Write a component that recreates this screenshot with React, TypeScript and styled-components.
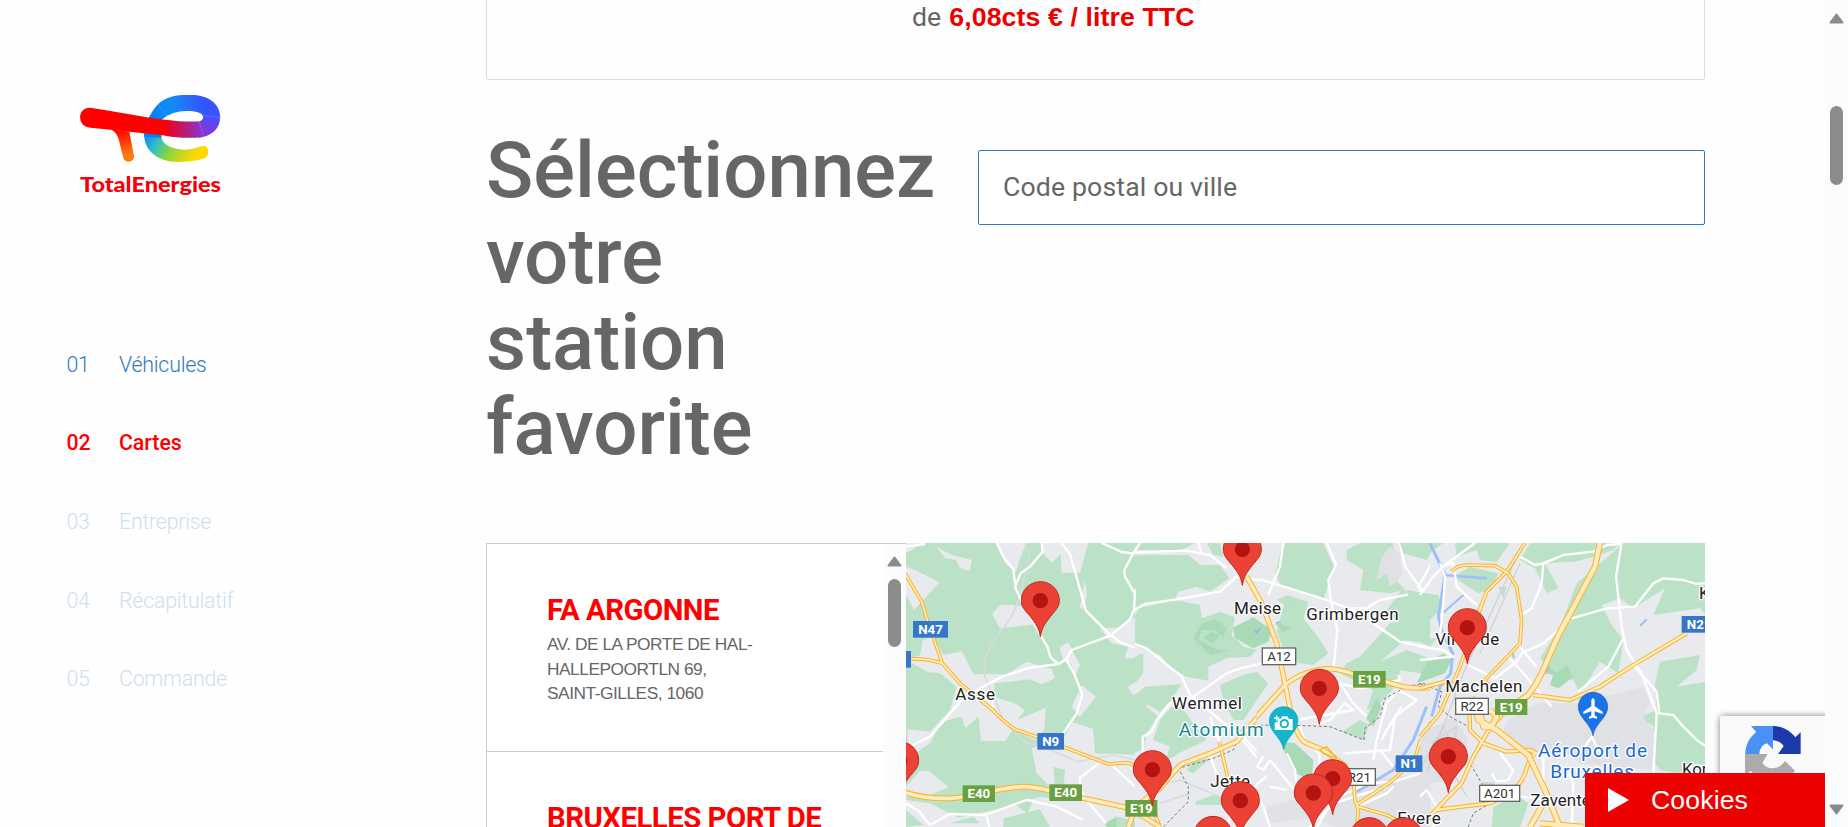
import React from 'react';
import styled, { createGlobalStyle } from 'styled-components';

const GlobalStyle = createGlobalStyle`
  * { box-sizing: border-box; }
  html, body { margin: 0; padding: 0; overflow: hidden; background: #fff; }
`;

const Page = styled.div`
  display: flex;
  width: 1848px;
  height: 827px;
  overflow: hidden;
  position: relative;
  background: #fefefe;
  color: #666;
  font-family: Roboto, 'Liberation Sans', sans-serif;
`;

const Sidebar = styled.aside`
  width: 486px;
  flex: none;
  padding: 95px 0 0 66.5px;
`;

const LogoSlot = styled.div`
  margin-left: 13.5px;
  height: 105px;
`;

const Steps = styled.ol`
  list-style: none;
  margin: 125.5px 0 0;
  padding: 0;
`;

const Step = styled.li<{ $state: 'done' | 'active' | 'todo' }>`
  display: flex;
  height: 78.6px;
  align-items: center;
  font-size: 21.33px;
  letter-spacing: ${p => (p.$state === 'active' ? -0.05 : -0.22)}px;
  line-height: 30px;
  font-weight: ${p => (p.$state === 'active' ? 500 : 300)};
  color: ${p => ({ done: '#337ab7', active: '#ff0000', todo: '#cfdfec' }[p.$state])};
`;

const StepNumber = styled.span`
  width: 52.5px;
`;

const Main = styled.main`
  width: 1219px;
  flex: none;
`;

const OfferCard = styled.section`
  height: 80px;
  border: 1px solid #d3dfe2;
  border-top: 0;
  border-radius: 0 0 3px 3px;
  padding-left: 425px;
  font-size: 26.67px;
  line-height: 34px;
  white-space: pre;
`;

const Price = styled.strong`
  margin-left: 1.5px;
  color: #ed0000;
  font-family: 'Liberation Sans', sans-serif;
  font-weight: 700;
  letter-spacing: 0.11px;
`;

const SearchRow = styled.section`
  display: flex;
  justify-content: space-between;
  padding-top: 48px;
  height: 463px;
`;

const Heading = styled.h1`
  margin: 0;
  width: 400px;
  font-size: 78px;
  line-height: 85.8px;
  font-weight: 500;
`;

const SearchInput = styled.input`
  margin-top: 22px;
  width: 727px;
  height: 75px;
  border: 1px solid #337ab7;
  border-radius: 2px;
  padding: 0 24px 1px;
  background: #fff;
  font: 400 26.67px Roboto, sans-serif;
  letter-spacing: 0.13px;
  color: #666;
  outline: 0;
  &::placeholder { color: #666; opacity: 1; }
`;

const Locator = styled.section`
  display: flex;
  height: 284px;
  overflow: hidden;
`;

const StationPanel = styled.div`
  display: flex;
  width: 420px;
  flex: none;
  border: 1px solid #ccc;
  border-width: 1px 0 0 1px;
`;

const StationList = styled.div`
  flex: 1;
  min-width: 0;
  background: #fff;
`;

const Station = styled.article`
  height: 208px;
  padding: 47px 60px 0;
  border-bottom: 1px solid #ccc;
`;

const StationName = styled.h2`
  margin: 0;
  color: #f00;
  font-size: 29.33px;
  font-weight: 700;
  letter-spacing: -0.5px;
  line-height: 38px;
  white-space: nowrap;
`;

const Address = styled.p`
  margin: 3px 0 0;
  font: 400 17.33px/24.5px 'Liberation Sans', sans-serif;
  letter-spacing: -0.48px;
  white-space: pre;
`;

const ScrollTrack = styled.div<{ $pad: number }>`
  width: 23px;
  flex: none;
  height: 100%;
  display: flex;
  flex-direction: column;
  align-items: center;
  padding: ${p => p.$pad}px 0 12px;
  background: #fcfcfc;
`;

const ScrollThumb = styled.div<{ $gap: number; $size: number }>`
  width: 13px;
  height: ${p => p.$size}px;
  margin-top: ${p => p.$gap}px;
  flex: none;
  border-radius: 7px;
  background: #8b8b8b;
`;

const PageScroll = styled.div`
  margin-left: auto;
  height: 100%;
  display: flex;
`;

const Spacer = styled.div`
  flex: 1;
`;

const CaptchaBadge = styled.div`
  position: absolute;
  left: 1720px;
  top: 716px;
  width: 105px;
  height: 111px;
  overflow: hidden;
  padding: 10px 0 0 25px;
  background: #f9f9f9;
  border-radius: 3px 0 0 3px;
`;

const CaptchaShadow = styled.div`
  position: absolute;
  left: 1700px;
  top: 696px;
  width: 125px;
  height: 131px;
  overflow: hidden;
  &::before {
    content: '';
    position: absolute;
    left: 20px;
    top: 20px;
    width: 340px;
    height: 130px;
    border-radius: 3px;
    box-shadow: 0 0 7px #808080;
  }
`;

const CookieBar = styled.button`
  position: absolute;
  left: 1585px;
  top: 773px;
  width: 240px;
  height: 54px;
  border: 0;
  padding: 0 0 0 23px;
  display: flex;
  align-items: center;
  gap: 22px;
  background: #ed0000;
  color: #fff;
  font: 400 26.67px 'Liberation Sans', sans-serif;
  letter-spacing: 0.1px;
`;

const ArrowIcon = styled.svg`
  flex: none;
`;

const Arrow = ({ down = false }: { down?: boolean }) => (
  <ArrowIcon width="15" height="11" viewBox="0 0 15 11">
    <path
      d={down ? 'M1.5 1.5H13.5L7.5 9.5Z' : 'M1.5 9.5H13.5L7.5 1.5Z'}
      fill="#8b8b8b"
      stroke="#8b8b8b"
      strokeWidth="2"
      strokeLinejoin="round"
    />
  </ArrowIcon>
);

const Logo = () => (
  <svg width="142" height="105" viewBox="60 45 426 315">
    <defs>
      <linearGradient id="sky" gradientUnits="userSpaceOnUse" x1="270" y1="130" x2="480" y2="90">
        <stop offset="0" stopColor="#0080ff" />
        <stop offset=".35" stopColor="#148cf5" />
        <stop offset=".8" stopColor="#3354ff" />
        <stop offset="1" stopColor="#3c55ff" />
      </linearGradient>
      <linearGradient id="band" gradientUnits="userSpaceOnUse" x1="318" y1="0" x2="480" y2="0">
        <stop offset="0" stopColor="#f0001c" />
        <stop offset=".35" stopColor="#b81c70" />
        <stop offset=".65" stopColor="#8833d0" />
        <stop offset="1" stopColor="#6a3ae8" />
      </linearGradient>
      <linearGradient id="turn" gradientUnits="userSpaceOnUse" x1="455" y1="108" x2="440" y2="165">
        <stop offset="0" stopColor="#3c55ff" />
        <stop offset=".6" stopColor="#783ae2" />
        <stop offset="1" stopColor="#8833d8" />
      </linearGradient>
      <linearGradient id="lower" gradientUnits="userSpaceOnUse" x1="262" y1="160" x2="400" y2="235">
        <stop offset="0" stopColor="#1088f4" />
        <stop offset=".25" stopColor="#32bfc0" />
        <stop offset=".55" stopColor="#90d53c" />
        <stop offset="1" stopColor="#ffd800" />
      </linearGradient>
      <linearGradient id="leg" x1="0" y1="0" x2="0.2" y2="1">
        <stop offset=".1" stopColor="#f00" />
        <stop offset=".9" stopColor="#ff7a10" />
      </linearGradient>
    </defs>
    <g>
      <path d="M253 165C252 208 288 247 360 246C400 245 420 239 434 234C451 226 448 197 430 197C415 200 396 209 373 209C327 207 305 190 304 168Z" fill="url(#lower)" />
      <path d="M252 170C251 138 270 99 294 73C318 49 350 45 390 44C447 45 481 72 481 113H430C430 98 407 93 377 93C350 94 334 101 319 109L304 120V174Z" fill="url(#sky)" />
      <path d="M430 108C431 102 481 104 480 115C479 151 447 171 417 173L418 124C427 121 431 116 430 108Z" fill="url(#turn)" />
      <path d="M317 119C354 124 391 126 418 124L429 170C397 176 351 174 317 167Z" fill="url(#band)" />
      <path d="M147 148C166 151 173 166 178 185L189 230C194 253 224 247 222 228L208 155Z" fill="url(#leg)" />
      <path d="M91 83C50 82 50 140 91 143L153 149L319 167V120C240 109 166 94 91 83Z" fill="#f00" />
      <path d="M294 73L320 108M430 106L480 113M418 124L429 166" stroke="#fff" strokeOpacity=".35" strokeWidth="1.3" />
    </g>
    <text x="60" y="336" fontFamily="Lato, sans-serif" fontWeight="900" fontSize="62" fill="#f5000c" textLength="423" lengthAdjust="spacingAndGlyphs">TotalEnergies</text>
  </svg>
);

const CaptchaIcon = () => (
  <svg width="56" height="56" viewBox="0 0 168 168">
    <path d="M84 0H18L34 18C13 35 1 57 1 84H43C44 67 54 54 66 52L84 70Z" fill="#4a90f5" />
    <path d="M84 0V43C97 44 109 50 116 60L99 84H167V19L151 34C135 13 112 1 84 0Z" fill="#1c3aa9" />
    <path d="M0 84V150L17 134C52 180 121 175 150 134L120 105C103 132 68 134 52 111L68 84Z" fill="#ababab" />
  </svg>
);

const GREEN = '#bbe2c7';
const LAND = '#e8eaed';

const Highway = ({ d, w = 13 }: { d: string; w?: number }) => (
  <g fill="none" strokeLinejoin="round">
    <path d={d} stroke="#f9b428" strokeWidth={w + 2} />
    <path d={d} stroke="#ffebbd" strokeWidth={w - 4} />
  </g>
);

const Pin = ({ x, y }: { x: number; y: number }) => (
  <g transform={`translate(${x} ${y})`}>
    <path
      d="M0 0C-4 -26 -14 -40 -30 -60C-46 -80 -57 -88 -57 -109C-57 -140 -31 -165 0 -165C31 -165 57 -140 57 -109C57 -88 46 -80 30 -60C14 -40 4 -26 0 0Z"
      fill="#ea4335"
      stroke="#c5221f"
      strokeWidth="3"
    />
    <circle cy="-108" r="23" fill="#b31412" />
  </g>
);

const Place = ({ x, y, w, size = 51, color = '#202124', children }: { x: number; y: number; w?: number; size?: number; color?: string; children: string }) => (
  <text
    x={x}
    y={y}
    textLength={w}
    lengthAdjust="spacing"
    fontFamily="Roboto, sans-serif"
    fontSize={size}
    fill={color}
    stroke="#fff"
    strokeWidth="8"
    strokeLinejoin="round"
    paintOrder="stroke"
  >
    {children}
  </text>
);

const shieldColors = {
  blue: ['#3576cb', '#fff', 'none'],
  green: ['#69a042', '#fff', 'none'],
  white: ['#fff', '#333', '#666'],
};

const Shield = ({ x, y, w, h = 50, kind, children }: { x: number; y: number; w: number; h?: number; kind: keyof typeof shieldColors; children: string }) => {
  const [bg, fg, line] = shieldColors[kind];
  return (
    <g>
      <rect x={x} y={y} width={w} height={h} fill={bg} stroke={line} strokeWidth="4" />
      <text
        x={x + w / 2}
        y={y + h / 2 + 14}
        textAnchor="middle"
        fontFamily="Roboto, sans-serif"
        fontWeight={kind === 'white' ? 400 : 700}
        fontSize="40"
        fill={fg}
      >
        {children}
      </text>
    </g>
  );
};

const WestLand = () => (
  <g>
    <rect x="0" y="0" width="815" height="861" fill={GREEN} />
    <g fill={LAND}>
      <path d="M18 9H70L18 40ZM110 20L155 45L216 60L208 93L180 85L168 60L135 55ZM290 9H380L360 55L347 97L315 70ZM425 9H565L540 98H485L482 42L455 68L425 35Z" />
      <path d="M18 80L45 90L119 127L42 210L18 165ZM276 222L300 195L350 195L395 210L410 252L300 265ZM555 120L561 165L548 210L540 200Z" />
      <path d="M18 360L60 345L68 300L100 290L130 345L186 334L220 403H320L380 365L455 388L465 415L425 433L390 418L285 430L280 470L345 490L375 512L352 540L438 503L432 570L405 600L340 567L315 603H243L235 530L195 564L185 530L125 545L90 610L25 655L22 568L90 575L150 510L170 440L120 400L85 397Z" />
      <path d="M478 322L505 307L540 375L527 405L512 370L490 360ZM545 435L587 470L540 532L515 500ZM600 265L665 262L715 223L709 280L740 310L810 350V400L735 395L700 468L683 440L735 410L730 355L673 355L685 320L635 310Z" />
      <path d="M518 547L579 566L585 640L740 645L720 555L762 550L790 485H810V861H795L650 830L540 795L500 790L410 700L395 625L490 595ZM18 740L60 693H86L146 742L90 765L18 770Z" />
      <path d="M18 780L90 790L175 833L290 808L420 770L520 785L650 825V861H18Z" />
    </g>
    <path d="M18 810L70 855L18 861ZM325 780L400 780L382 820ZM150 850L220 830L240 850ZM310 835L420 808L450 861H310Z" fill={GREEN} />
    <path d="M614 850L650 830V861H620Z" fill="#a8dab5" />
    <path d="M460 680L495 690L490 755L465 740Z" fill={GREEN} />
    <path d="M372 9L388 45L360 170L335 230L275 310L257 350L254 410L275 455L310 540L370 605L450 630L535 665L640 645L705 660" fill="none" stroke="#d8dade" strokeWidth="5" />
    <g fill="none" stroke="#fff" strokeWidth="7" strokeLinejoin="round">
      <path d="M425 9L428 35L390 80L362 100L345 140L365 185L421 285L442 320L452 353L476 372L498 358L515 330L632 286L690 238L703 208L740 190L815 178" />
      <path d="M290 9L310 50L340 88L345 130M485 9L510 42L535 130L558 212L632 286L665 308L722 330L815 388M720 9L697 45L673 90L674 108L704 160L703 208M605 9L665 36L697 40L815 34" />
      <path d="M476 372L390 383L310 408L240 445L180 485L90 590L18 625M498 358L522 400L547 463L530 520L490 580M275 455L278 505M815 495L785 515L765 570L730 580L727 670L690 685M600 668L540 713V745L560 780L618 850M640 680L700 735L760 790M18 790L55 812L90 855L150 822L255 825L380 780L470 800L550 840M260 830L268 861M18 20L75 12" />
    </g>
    <Highway w={9} d="M15 100L65 185L85 250L127 370L180 430L278 510Q310 545 345 568L410 590L625 672L685 668L705 680M30 357Q80 355 127 370" />
    <Highway w={15} d="M10 756Q80 778 150 775C240 770 300 740 370 740C430 740 460 760 530 770L690 805L770 861M685 861L700 820L815 695M720 861L795 765" />
  </g>
);

const CentreLand = () => (
  <g transform="translate(780 0)">
    <rect x="30" y="0" width="785" height="861" fill={LAND} />
    <g fill={GREEN}>
      <path d="M370 9H490L522 80L490 180L365 140L345 100ZM560 30L600 9H700V110L735 150L690 160L600 150L610 90L560 60Z" />
      <path d="M380 165L445 185L430 235L480 300L505 340L460 375L385 365L350 275Z" />
      <path d="M540 400L560 370L600 350L690 250L715 245L735 300L660 365L740 330L810 355V405L720 390L715 430L650 500L620 510L640 450ZM680 210L725 150L800 170L810 220V310L725 300L715 245Z" />
      <path d="M350 180L380 165L390 205ZM545 575L600 540L628 555L610 600ZM735 770L768 755L770 772L740 780Z" />
    </g>
    <g fill="#a8dab5">
      <path d="M365 605L405 610L460 660L455 720L405 700L375 640ZM335 240L395 265L370 275ZM618 535L650 475L665 500L640 560Z" />
    </g>
    <path d="M665 50L690 20L720 40L725 110L690 140L680 100L650 120Z" fill="#dfe1e4" />
    <path d="M320 800L400 780L500 790L600 720L810 700V861H530L450 835L320 850Z" fill="#e0e2e5" />
    <path d="M330 250L365 243L350 252Z" fill="#8ab4f8" />
    <path d="M590 755L700 690L760 600L800 500" stroke="#9dbffb" strokeWidth="9" fill="none" />
    <g fill="none" stroke="#fff" strokeWidth="7" strokeLinejoin="round">
      <path d="M260 105L500 180L590 215L720 305L815 325M500 9L528 75L505 120L512 180L532 270L520 390L490 400M720 9L735 80L790 155L660 180L620 205L560 205M370 9L360 80L325 165M815 70L775 140L815 190" />
      <path d="M330 660L420 770M330 660L310 690L290 680L310 650M380 640L405 690L420 800M330 861L310 800L280 740L320 710M330 740L380 750M480 740L478 640L435 600L410 540L580 510L555 490L510 540L480 550M540 430L600 445L720 420L715 405M540 430L580 490L620 530M550 640L690 630L705 530L770 480L715 450L680 490L650 600L640 660" />
      <path d="M660 630L700 680M470 861L520 780L620 730L700 725L815 690M725 500L680 570L665 600M450 861L520 790L680 740M590 800L680 760L700 740" />
    </g>
    <path d="M300 556L380 555L510 560L612 600L615 565L660 530L675 475L740 440L790 430L815 440" fill="none" stroke="#73777c" strokeWidth="3" strokeDasharray="9 7" />
    <Highway w={9} d="M580 720L585 780L595 810L590 861M590 795L700 720L765 655L780 605L815 545M595 800L680 825L750 861" />
    <Highway w={14} d="M285 535L375 435Q415 400 480 388C535 380 560 400 635 415C700 425 710 450 815 443M260 110L305 190L350 310L385 480Q405 595 440 610L490 630L560 680" />
    <path d="M480 630L500 620L530 655L490 640Z" fill="none" stroke="#f9b428" strokeWidth="4" />
  </g>
);

const MeiseLand = () => (
  <g transform="translate(630 0)" clipPath="url(#meise)">
    <clipPath id="meise">
      <path d="M75 0H400L500 230L490 370V445L440 480V861H75Z" />
    </clipPath>
    <rect x="60" y="0" width="450" height="861" fill={LAND} />
    <g fill={GREEN}>
      <path d="M60 9H255L215 30L90 30L60 25ZM290 9L330 9L340 50L310 45ZM60 45H235L270 75L330 75L358 115L300 155L260 140L205 155L190 190L130 190L75 205V110Z" />
      <path d="M60 265L85 205L195 180L270 195L275 235L330 215L375 232L365 285L400 320L440 330L420 350L350 355L295 380V422L230 410L180 380L150 345L60 310ZM75 350L100 340V400L75 430ZM85 9H60V100ZM75 465L105 440L215 432L180 485L150 515L115 495L75 510Z" />
      <path d="M60 480L110 500L145 530L110 580L100 630L60 640ZM150 540L185 500L215 500L255 560L290 600L215 635L165 665L180 620L130 600ZM330 435L400 405L440 395L475 430L400 540L370 540L340 480ZM230 690L250 665L300 655L250 700ZM255 785L310 765L340 775L335 795H258ZM470 40L520 100L515 150L480 145Z" />
    </g>
    <g fill="#a8dab5">
      <path d="M368 263L430 232L485 270L475 305L430 325L375 295Z" />
      <path fillRule="evenodd" d="M250 295L275 250L315 237L350 265L340 290L310 270L275 270L265 300L325 330L360 330L300 345ZM280 295L305 275L330 285L310 310Z" />
    </g>
    <path d="M432 275L455 262L440 282Z" fill="#8ab4f8" />
    <path d="M145 735L210 720L330 770L400 765L460 790M150 790L240 760" fill="none" stroke="#d8dade" strokeWidth="5" />
    <g fill="none" stroke="#fff" strokeWidth="7" strokeLinejoin="round">
      <path d="M0 20L40 38L230 32L300 45L350 85M265 9L275 40M90 9L45 75L42 100L75 150L72 210L105 192L200 178L330 155L380 110L500 130" />
      <path d="M0 285L15 290L110 325L215 410L240 465L330 540L380 580L490 710L520 740M250 470L350 400L390 385L480 365M250 470L180 490L140 540L125 575L98 590V670M300 530L330 610M0 670L60 685L130 760M400 590L455 650M300 650L320 700M520 650L450 660L480 690L420 760L460 861M370 800L350 861M400 740L450 740" />
    </g>
    <path d="M470 556H400L370 630L310 655L205 685L235 740V785L160 861" fill="none" stroke="#73777c" strokeWidth="3" strokeDasharray="9 7" />
    <Highway w={9} d="M328 605L355 720M60 670L80 685M150 861L130 810" />
    <Highway w={14} d="M55 861L70 805L150 745Q190 695 215 672L300 640L380 605L525 435M60 805L150 861M410 110L455 190L500 310" />
  </g>
);

const EastLand = () => (
  <g transform="translate(1560 0)">
    <rect x="30" y="0" width="830" height="861" fill={LAND} />
    <g fill={GREEN}>
      <path d="M-60 9H70L35 35L20 60L-50 40ZM105 9H270L230 65L180 60L170 30L110 50ZM330 9H600L580 30L520 50L465 65L375 70L415 145L380 160L345 85L300 60ZM610 9H860V230L840 205L700 225L735 145L640 205L600 175L545 195L575 255L610 300L595 400L540 365L480 460L460 420L410 410L360 355L420 260L470 130L530 80ZM-40 150L55 165L65 205L20 250L-20 220ZM235 140L260 140L250 175ZM0 305L55 290L30 320Z" />
      <path d="M720 365L840 345L830 390L770 440L860 425V680L830 670L775 700L720 690L690 650L700 560L660 530L710 510L705 430ZM100 110L150 80L235 100L215 150L175 160ZM220 800L290 765L325 790L300 861H215ZM185 725L225 728L205 760Z" />
    </g>
    <path d="M380 375L410 400L440 375L460 410L415 445L390 435L400 405L375 400ZM20 370L70 340L95 360L75 400L-10 430Z" fill="#a8dab5" />
    <path d="M265 540L350 490L470 490L600 460L670 440L690 490L670 530L705 580L695 690L480 670L420 620L340 640L240 590ZM0 580L100 530L145 600L110 710L0 740Z" fill="#dfe1e4" />
    <g stroke="#9dbffb" fill="none">
      <path d="M30 9L75 105L55 230L68 280L98 340L92 400L60 440L35 530" strokeWidth="9" />
      <path d="M75 105L200 115" strokeWidth="8" />
      <path d="M70 218L130 165M375 400L388 380M278 340L282 355M660 258L680 238" strokeWidth="6" />
    </g>
    <g fill="none" stroke="#d0d2d6" strokeWidth="4">
      <path d="M310 9L190 270L130 400L70 560L0 690M300 70L180 340" />
      <path d="M20 700L70 560L100 620L35 610L110 560L95 690L140 770" />
    </g>
    <g fill="none" stroke="#fff" strokeWidth="7" strokeLinejoin="round">
      <path d="M0 165L40 110L75 75L165 9M60 70L75 110L70 190L60 290M75 75L100 70L110 140L170 195M300 50L345 75L370 70L430 45L520 35L560 15L600 12M370 70L365 130L335 205L305 225M605 9L588 110L605 260L620 330L665 400L710 520L700 700M455 235L560 205L645 200L700 130L730 115L790 120L830 132L860 130M610 295L565 380L475 455M640 375L710 455L718 520L760 525L790 560L830 600L860 620M255 340L310 400L395 500M145 375L225 415L290 365L305 340L370 310L450 240M290 310L350 380M0 320L70 330L100 350L0 360M480 640L515 590L540 640M240 640L280 690L265 720L230 725L215 700M440 690L460 730L455 861M300 770L400 780M0 770L20 750L50 800L40 861M370 720L370 650L440 630" />
    </g>
    <path d="M0 430L65 455L55 500L90 530L145 560L190 610L150 670L185 730L210 790L160 820L145 861" fill="none" stroke="#73777c" strokeWidth="3" strokeDasharray="9 7" />
    <Highway w={9} d="M315 9L260 95L200 155L170 230M200 155L180 210L120 380L60 520L0 590M95 95Q110 75 145 75L225 77L265 100L290 140L305 240L300 310L195 420L210 445" />
    <Highway w={11} d="M340 465L450 480L540 440L640 375L800 280M0 445L75 425L150 450M148 480L150 570L190 610L260 635L330 630L350 640M10 850L85 770L125 730L160 650L200 580L245 525L325 470M50 810L125 800L210 790Q300 750 315 700L330 655L345 640" />
    <Highway w={17} d="M540 9L525 80L440 240C390 320 380 395 325 465L240 520M155 470L175 540L230 570L325 645L375 750L420 861M330 861L370 790M180 520L190 560Q215 570 230 530L210 510M360 850L490 861" />
  </g>
);

const MapCanvas = styled.svg`
  flex: none;
  display: block;
`;

const StationMap = () => (
  <MapCanvas width="799" height="284" viewBox="18 9 2397 852">
    <CentreLand />
    <WestLand />
    <MeiseLand />
    <EastLand />
    <Place x={166} y={480} w={119}>Asse</Place>
    <Place x={1002} y={221} w={141}>Meise</Place>
    <Place x={1219} y={241} w={277}>Grimbergen</Place>
    <Place x={816} y={508} w={210}>Wemmel</Place>
    <Place x={836} y={587} w={255} size={57} color="#12868f">Atomium</Place>
    <Place x={931} y={740} w={119}>Jette</Place>
    <Place x={1492} y={851} w={130}>Evere</Place>
    <Place x={1606} y={315} w={192}>Vilvorde</Place>
    <Place x={1636} y={457} w={231}>Machelen</Place>
    <Place x={1891} y={798} w={226}>Zaventem</Place>
    <Place x={2397} y={178}>K</Place>
    <Place x={2346} y={704} w={245}>Kortenberg</Place>
    <Place x={1914} y={651} w={327} size={57} color="#1967d2">Aéroport de</Place>
    <Place x={1951} y={714} w={251} size={57} color="#1967d2">Bruxelles</Place>
    <Shield kind="blue" x={39} y={243} w={105}>N47</Shield>
    <rect x="0" y="333" width="33" height="50" fill="#3576cb" />
    <Shield kind="blue" x={412} y={579} w={80}>N9</Shield>
    <Shield kind="green" x={188} y={736} w={97}>E40</Shield>
    <Shield kind="green" x={448} y={733} w={98}>E40</Shield>
    <Shield kind="green" x={676} y={780} w={96}>E19</Shield>
    <Shield kind="white" x={1087} y={324} w={100}>A12</Shield>
    <Shield kind="green" x={1359} y={393} w={98}>E19</Shield>
    <Shield kind="white" x={1330} y={686} w={96}>R21</Shield>
    <Shield kind="blue" x={1487} y={646} w={80}>N1</Shield>
    <Shield kind="white" x={1667} y={475} w={98} h={48}>R22</Shield>
    <Shield kind="green" x={1785} y={477} w={97} h={48}>E19</Shield>
    <Shield kind="white" x={1739} y={736} w={120} h={48}>A201</Shield>
    <Shield kind="blue" x={2345} y={228} w={105}>N21</Shield>
    <g transform="translate(1151 629)">
      <path d="M0 0C-5 -35 -43 -54 -43 -86C-43 -110 -24 -129 0 -129C24 -129 43 -110 43 -86C43 -54 5 -35 0 0Z" fill="#12b5cb" stroke="#129eaf" strokeWidth="2" />
      <path d="M-18 -92H-9L-5 -100H11L16 -92H27V-59H-27V-82H-18Z" fill="#fff" />
      <circle cx="2" cy="-78" r="11" fill="#fff" stroke="#12b5cb" strokeWidth="6" />
      <path d="M-21 -103V-87M-29 -95H-13" stroke="#fff" strokeWidth="4" />
    </g>
    <g transform="translate(2079 587)">
      <path d="M0 0C-5 -35 -44 -54 -44 -86C-44 -110 -25 -130 0 -130C25 -130 44 -110 44 -86C44 -54 5 -35 0 0Z" fill="#1a73e8" stroke="#185abc" strokeWidth="2" />
      <path d="M0 -112C-4 -112 -5 -107 -5 -102V-88L-29 -72V-65L-5 -73V-61L-12 -56V-51L0 -54L12 -51V-56L5 -61V-73L29 -65V-72L5 -88V-102C5 -107 4 -112 0 -112Z" fill="#fff" />
    </g>
    <Pin x={421} y={290} />
    <Pin x={757} y={797} />
    <Pin x={-1} y={770} />
    <Pin x={1027} y={136} />
    <Pin x={1258} y={553} />
    <Pin x={1702} y={371} />
    <Pin x={1645} y={758} />
    <Pin x={1298} y={824} />
    <Pin x={1240} y={867} />
    <Pin x={1021} y={890} />
    <Pin x={939} y={994} />
    <Pin x={1408} y={998} />
    <Pin x={1510} y={998} />
  </MapCanvas>
);

const steps = [
  ['01', 'Véhicules', 'done'],
  ['02', 'Cartes', 'active'],
  ['03', 'Entreprise', 'todo'],
  ['04', 'Récapitulatif', 'todo'],
  ['05', 'Commande', 'todo'],
] as const;

const stations = [
  { name: 'FA ARGONNE', address: 'AV. DE LA PORTE DE HAL-\nHALLEPOORTLN 69,\nSAINT-GILLES, 1060' },
  { name: 'BRUXELLES PORT DE', address: '' },
];

export default function App() {
  return (
    <>
      <GlobalStyle />
      <Page>
        <Sidebar>
          <LogoSlot>
            <Logo />
          </LogoSlot>
          <Steps>
            {steps.map(([number, label, state]) => (
              <Step key={number} $state={state}>
                <StepNumber>{number}</StepNumber>
                <span>{label}</span>
              </Step>
            ))}
          </Steps>
        </Sidebar>
        <Main>
          <OfferCard>
            de <Price>6,08cts € / litre TTC</Price>
          </OfferCard>
          <SearchRow>
            <Heading>Sélectionnez votre station favorite</Heading>
            <SearchInput placeholder="Code postal ou ville" />
          </SearchRow>
          <Locator>
            <StationPanel>
              <StationList>
                {stations.map(s => (
                  <Station key={s.name}>
                    <StationName>{s.name}</StationName>
                    <Address>{s.address}</Address>
                  </Station>
                ))}
              </StationList>
              <ScrollTrack $pad={12}>
                <Arrow />
                <ScrollThumb $gap={12} $size={68} />
              </ScrollTrack>
            </StationPanel>
            <StationMap />
          </Locator>
        </Main>
        <PageScroll>
          <ScrollTrack $pad={13}>
            <Arrow />
            <ScrollThumb $gap={82} $size={79} />
            <Spacer />
            <Arrow down />
          </ScrollTrack>
        </PageScroll>
        <CaptchaShadow />
        <CaptchaBadge>
          <CaptchaIcon />
        </CaptchaBadge>
        <CookieBar>
          <svg width="21" height="24" viewBox="0 0 21 24">
            <path d="M0 0L21 12L0 24Z" fill="#fff" />
          </svg>
          Cookies
        </CookieBar>
      </Page>
    </>
  );
}
